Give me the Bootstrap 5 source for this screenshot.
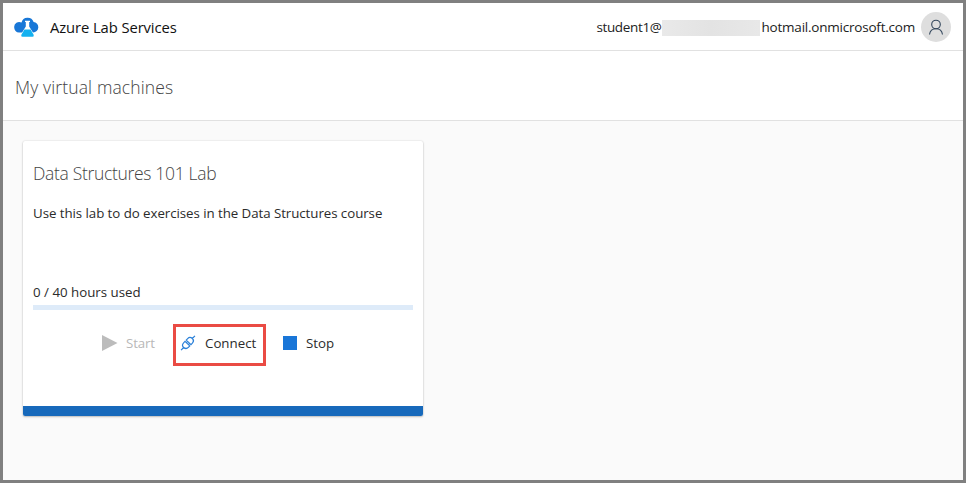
<!DOCTYPE html>
<html lang="en">
<head>
<meta charset="utf-8">
<meta name="viewport" content="width=device-width, initial-scale=1">
<title>Azure Lab Services</title>
<link href="https://cdn.jsdelivr.net/npm/bootstrap@5.3.0/dist/css/bootstrap.min.css" rel="stylesheet">
<style>
body{font-family:"Segoe UI","Open Sans","Noto Sans",sans-serif;font-size:13.3px;line-height:20px;color:#2b2b2b;background:#fafafa}
.app-frame{height:100vh;border:3px solid #808080;overflow:hidden}
.app-bar{height:48px;padding:0 12px 0 11px;border-bottom:1px solid #e1e1e1}
.brand-name{font-size:14.8px;font-weight:500;color:#111;margin:1px 0 0 11px;letter-spacing:-.1px}
.account{font-size:13.5px;color:#222}
.account-user{letter-spacing:-.35px}
.account-domain{letter-spacing:-.22px}
.redacted{width:98px;height:16px;background:linear-gradient(90deg,#e9e9e9,#e3e3e3 50%,#e8e8e8);margin-right:2px;margin-top:2px}
.avatar{width:30px;height:30px;background:#dedede;margin-left:6px}
.page-head{height:70px;padding:2px 12px 0;border-bottom:1px solid #e1e1e1}
.light-title{font-weight:300;color:#444;font-size:17.5px;line-height:24px;letter-spacing:.13px}
.vm-card .light-title{letter-spacing:-.32px}
.vm-card{width:400px;height:275px;margin:20px 0 0 20px;border-radius:2px;box-shadow:0 1px 2px rgba(0,0,0,.22),0 0 2px rgba(0,0,0,.14)}
.vm-body{padding:20px 10px 0}
.vm-desc{margin-top:18px;height:79px;letter-spacing:-.055px}
.hours-bar{height:5px;background:#deebf9;margin-top:3px}
.vm-actions{margin:14px 0 0 60px}
.vm-action{height:42px;border:3px solid transparent;color:#2b2b2b;line-height:20px}
.vm-action.is-target{border-color:#ea4b44;width:93px;padding:0 0 4px 4px}
.vm-action.is-off{color:#b8b8b8;width:80px;padding:0 0 4px 6px}
.vm-action.is-stop{padding:0 0 4px 14px}
.action-text{margin-left:9px}
.is-off .action-text{margin-left:8px;letter-spacing:-.15px}
.vm-foot{height:10px;background:#1769bb;border-radius:0 0 2px 2px}
</style>
</head>
<body>
<div class="app-frame">
  <header class="app-bar bg-white d-flex align-items-center">
    <svg width="25" height="20" viewBox="0 0 25 20" aria-hidden="true">
      <path fill="#1877d7" d="M5 15.500A5 5 0 0 1 .2 10.300A5 5 0 0 1 7.500 5.500A6.300 6.300 0 0 1 19.600 5A5.300 5.300 0 0 1 24.300 10.500A5.200 5.200 0 0 1 19 15.500Z"/>
      <path fill="#fff" d="M11 3.800h5v1.300h-.8v4.500L20.500 18v2H6.500v-2l5.300-8.400V5.100H11z"/>
      <path fill="#14b1f0" d="M10.400 12.600h6.200l3 5.200q.8 1.900-1 1.900H8.400q-1.800 0-1-1.900z"/>
    </svg>
    <span class="brand-name">Azure Lab Services</span>
    <div class="account ms-auto d-flex align-items-center">
      <span class="account-user">student1@</span><span class="redacted"></span><span class="account-domain">hotmail.onmicrosoft.com</span>
      <span class="avatar rounded-circle d-flex align-items-center justify-content-center">
        <svg width="16" height="18" viewBox="0 0 16 18" fill="none" stroke="#32465c" stroke-width="1.100" aria-hidden="true"><circle cx="8" cy="6.500" r="4.300"/><path d="M1.500 16.500C2 13 4.500 10.800 8 10.800s6 2.200 6.500 5.700"/></svg>
      </span>
    </div>
  </header>
  <section class="page-head bg-white d-flex align-items-center">
    <h1 class="light-title mb-0">My virtual machines</h1>
  </section>
  <main>
    <article class="vm-card bg-white d-flex flex-column">
      <div class="vm-body flex-grow-1">
        <h2 class="light-title mb-0">Data Structures 101 Lab</h2>
        <p class="vm-desc mb-0">Use this lab to do exercises in the Data Structures course</p>
        <div>0 / 40 hours used</div>
        <div class="hours-bar"></div>
        <div class="vm-actions d-flex">
          <button class="vm-action is-off bg-transparent d-flex align-items-center" disabled>
            <svg width="16" height="16" viewBox="0 0 16 16" aria-hidden="true"><path fill="#bcbcbc" d="M0 0l15.500 8L0 16z"/></svg><span class="action-text">Start</span>
          </button>
          <button class="vm-action is-target bg-transparent d-flex align-items-center">
            <svg width="16" height="16" viewBox="0 0 16 16" fill="none" stroke="#2b80d8" stroke-width="1.200" aria-hidden="true"><g transform="translate(8 8) rotate(-46)"><path d="M-10 0h3.800M6.200 0h3.800M-.9-3.300h-2a3.300 3.300 0 0 0 0 6.600h2zM.9-3.300h2a3.300 3.300 0 0 1 0 6.600h-2zM-.9-1.500h1.800M-.9 1.500h1.800"/></g></svg><span class="action-text">Connect</span>
          </button>
          <button class="vm-action is-stop bg-transparent d-flex align-items-center">
            <svg width="14" height="14" viewBox="0 0 14 14" aria-hidden="true"><path fill="#1976d8" d="M0 0h14v14H0z"/></svg><span class="action-text">Stop</span>
          </button>
        </div>
      </div>
      <div class="vm-foot"></div>
    </article>
  </main>
</div>
<script src="https://cdn.jsdelivr.net/npm/bootstrap@5.3.0/dist/js/bootstrap.bundle.min.js"></script>
</body>
</html>
